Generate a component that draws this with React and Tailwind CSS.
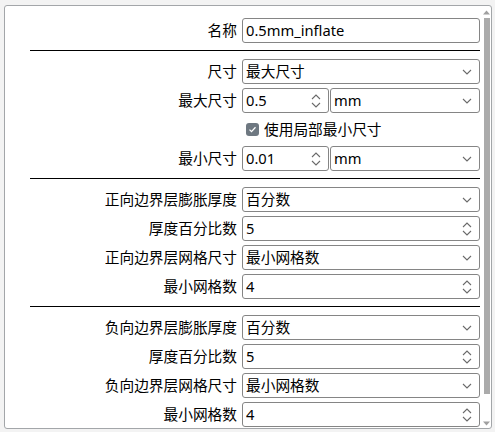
const font = { fontFamily: '"Noto Sans", "Noto Sans CJK SC", sans-serif' };

const Chevron = () => (
  <svg width="10" height="6" viewBox="0 0 10 6" className="shrink-0">
    <path d="M1 1l4 4 4-4" fill="none" stroke="#6b6b6b" strokeWidth="1.1" />
  </svg>
);

const Spin = () => (
  <svg width="10" height="16" viewBox="0 0 10 16" className="shrink-0">
    <path d="M1 6l4-4 4 4M1 10l4 4 4-4" fill="none" stroke="#6b6b6b" strokeWidth="1.1" />
  </svg>
);

const Box = ({ children, right }) => (
  <div className="h-[25px] border border-[#858585] rounded-[3px] bg-white flex items-center pl-[3px] pr-[7px] min-w-0">
    <span className="flex-1 truncate leading-[23px]">{children}</span>
    {right}
  </div>
);

const Select = ({ value }) => <Box right={<Chevron />}>{value}</Box>;
const Number = ({ value }) => <Box right={<Spin />}>{value}</Box>;

const Row = ({ label, children }) => (
  <div className="grid grid-cols-[232px_1fr] gap-x-[5px] items-center">
    <div className="text-right whitespace-nowrap leading-[25px]">{label}</div>
    {children}
  </div>
);

const Rule = () => <div className="ml-[25px] h-px bg-black mt-[3px] mb-[4px]" />;

const Unit = ({ value }) => (
  <div className="grid grid-cols-[87px_1fr] gap-x-[1px]">
    <Number value={value} />
    <Select value="mm" />
  </div>
);

export default function App() {
  return (
    <div className="w-[495px] h-[432px] bg-[#f3f3f3] pt-[5px] pl-[4px] text-[14.7px] text-black" style={font}>
      <div className="w-[488px] h-[424px] border border-[#a3a6a9] rounded-[3px] bg-white flex overflow-hidden">
        <div className="flex-1 pt-[12px] pr-[2px] flex flex-col gap-[4px]">
          <Row label="名称">
            <Box>0.5mm_inflate</Box>
          </Row>
          <Rule />
          <Row label="尺寸">
            <Select value="最大尺寸" />
          </Row>
          <Row label="最大尺寸">
            <Unit value="0.5" />
          </Row>
          <Row label="">
            <div className="flex items-center h-[25px] pl-[4px] gap-[5px]">
              <span className="w-[13px] h-[13px] rounded-[3px] bg-[#6e7881] flex items-center justify-center">
                <svg width="9" height="9" viewBox="0 0 9 9">
                  <path d="M1.5 4.6l2 2 4-4.4" fill="none" stroke="white" strokeWidth="1.3" />
                </svg>
              </span>
              <span className="leading-[25px]">使用局部最小尺寸</span>
            </div>
          </Row>
          <Row label="最小尺寸">
            <Unit value="0.01" />
          </Row>
          <Rule />
          <Row label="正向边界层膨胀厚度">
            <Select value="百分数" />
          </Row>
          <Row label="厚度百分比数">
            <Number value="5" />
          </Row>
          <Row label="正向边界层网格尺寸">
            <Select value="最小网格数" />
          </Row>
          <Row label="最小网格数">
            <Number value="4" />
          </Row>
          <Rule />
          <Row label="负向边界层膨胀厚度">
            <Select value="百分数" />
          </Row>
          <Row label="厚度百分比数">
            <Number value="5" />
          </Row>
          <Row label="负向边界层网格尺寸">
            <Select value="最小网格数" />
          </Row>
          <Row label="最小网格数">
            <Number value="4" />
          </Row>
        </div>
        <div className="w-[9px] flex flex-col items-center pt-[4px] pb-[2px]">
          <svg width="7" height="5" viewBox="0 0 7 5">
            <path d="M0 4.5L3.5 0.5 7 4.5z" fill="#a0a0a0" />
          </svg>
          <div className="w-[6px] h-[376px] mt-[3px] bg-[#ababab]" />
          <div className="flex-1" />
          <svg width="7" height="5" viewBox="0 0 7 5">
            <path d="M0 0.5L3.5 4.5 7 0.5z" fill="#a0a0a0" />
          </svg>
        </div>
      </div>
    </div>
  );
}
